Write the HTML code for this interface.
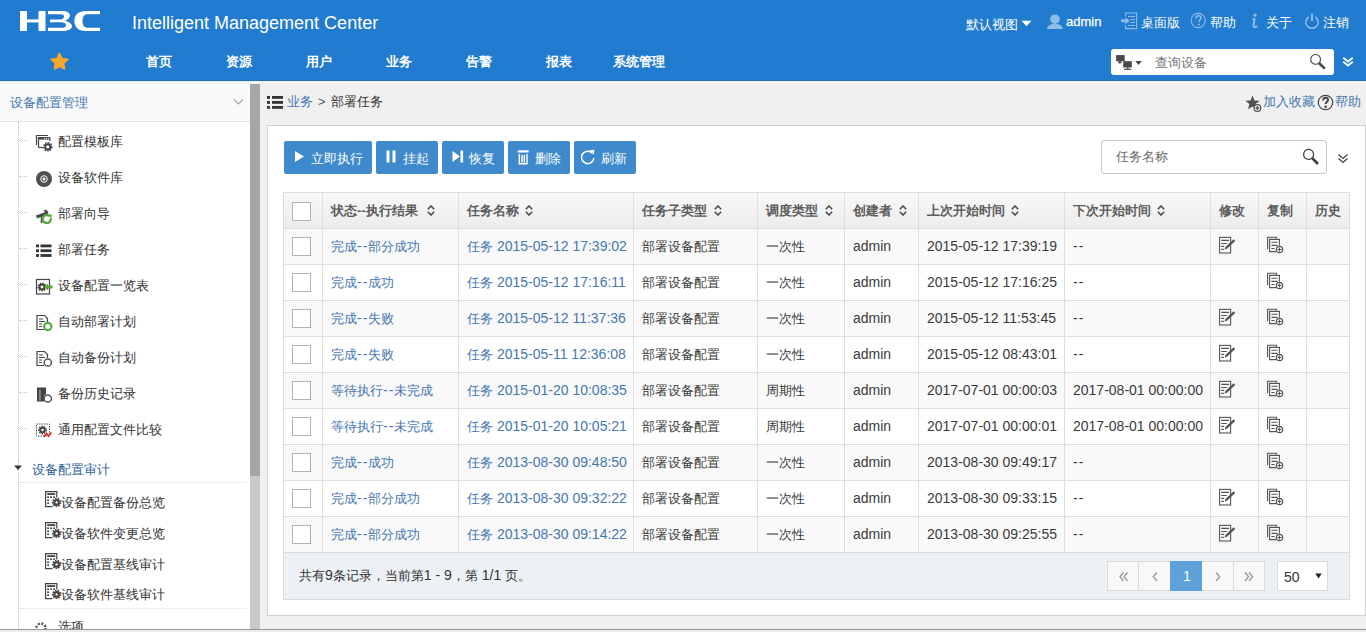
<!DOCTYPE html>
<html><head><meta charset="utf-8">
<style>
*{margin:0;padding:0;box-sizing:border-box}
html,body{width:1366px;height:632px;overflow:hidden;background:#f0f0f0;font-family:"Liberation Sans",sans-serif;font-size:13px;color:#333}
.a{position:absolute;white-space:nowrap;line-height:16px}
.l{font-size:14px;line-height:0}
.hy{font-size:14px;line-height:0;letter-spacing:1px}
#hdr{position:absolute;left:0;top:0;width:1366px;height:81px;background:#217bce;border-bottom:1px solid #2a6cb0}
.nav{position:absolute;top:54px;font-size:13px;font-weight:bold;color:#fff;line-height:16px}
.tl{position:absolute;top:15px;font-size:13px;color:#fff;line-height:16px;white-space:nowrap}
#side{position:absolute;left:0;top:81px;width:250px;height:548px;background:#fff;overflow:hidden}
#main{position:absolute;left:260px;top:81px;width:1106px;height:548px;background:#f0f0f0}
</style></head><body>
<div id="hdr">
<svg class="a" style="left:0;top:0" width="110" height="45" viewBox="0 0 110 45"><g fill="#fff">
<rect x="20" y="11" width="7" height="20"/><rect x="38.5" y="11" width="7" height="20"/><rect x="20" y="19.4" width="25" height="3"/>
<path d="M48,11 H62 C67.5,11 70,13 70,15.5 C70,17.5 68,19.5 65,20.8 C69,21.8 72,24 72,26 C72,29.5 68,31 62,31 H48 V27.8 H61 C64.5,27.8 66,27 66,25.5 C66,23.5 64.5,22.3 61,22.3 H50 V19.4 H60 C63,19.4 64,18 64,16.5 C64,15 63,14.3 60,14.3 H48 Z"/>
<path d="M100,11 H86 C78,11 74.4,15 74.4,21 C74.4,27 78,31 86,31 H100 V27.8 H88 C84,27.8 82.5,25 82.5,21 C82.5,17 84,14.3 88,14.3 H100 Z"/>
</g></svg>
<div class="a" style="left:132px;top:12px;font-size:18px;line-height:22px;color:#fff">Intelligent Management Center</div>
<div class="tl" style="left:966px;top:17px">默认视图</div>
<svg class="a" style="left:1021px;top:20px" width="11" height="7" viewBox="0 0 11 7"><path fill="#fff" d="M0.5 0.8 H10.5 L5.5 6.2 Z"/></svg>
<svg class="a" style="left:1047px;top:14px" width="17" height="16" viewBox="0 0 17 16"><g fill="#8fbde9"><circle cx="8" cy="5.2" r="4.8"/><path d="M0 15 C0.5 11.5 3 10 8 10 C13 10 15.5 11.5 16 15 Z"/></g></svg>
<div class="tl" style="left:1066px;top:14px;-webkit-text-stroke:0.25px #fff">admin</div>
<svg class="a" style="left:1120px;top:12px" width="18" height="18" viewBox="0 0 18 18"><g fill="none" stroke="#8fbde9" stroke-width="1.1"><path d="M5.6 4.2 V1 H16.6 V16.6 H5.6 V13.2"/><path d="M8 4.5 H15 M10.5 7.5 H15 M10.5 10.5 H15 M8 13.5 H15"/></g><path fill="#8fbde9" d="M1 7.3 H5.5 V5.2 L9.7 8.75 L5.5 12.3 V10.2 H1 Z"/></svg>
<div class="tl" style="left:1141px">桌面版</div>
<svg class="a" style="left:1190px;top:12px" width="17" height="17" viewBox="0 0 17 17"><circle cx="8.2" cy="8.5" r="7.1" fill="none" stroke="#8fbde9" stroke-width="1.1"/><path d="M6 6.5 C6 4.5 7.2 3.8 8.5 3.8 C10 3.8 11 4.7 11 6 C11 7.6 8.7 7.9 8.7 10" fill="none" stroke="#8fbde9" stroke-width="1.5"/><circle cx="8.7" cy="12.5" r="1" fill="#8fbde9"/></svg>
<div class="tl" style="left:1210px">帮助</div>
<svg class="a" style="left:1250px;top:13px" width="10" height="16" viewBox="0 0 10 16"><circle cx="5" cy="2.2" r="1.6" fill="#8fbde9"/><path d="M3.6 6 L4.4 6 L3.6 12.5 C3.4 14 4.6 14.6 6.6 13.6" fill="none" stroke="#8fbde9" stroke-width="2.1" stroke-linecap="round"/></svg>
<div class="tl" style="left:1266px">关于</div>
<svg class="a" style="left:1304px;top:13px" width="16" height="17" viewBox="0 0 16 17"><path d="M4.5 4 A6.2 6.2 0 1 0 11.5 4" fill="none" stroke="#8fbde9" stroke-width="1.6"/><path d="M8 0.6 V8" stroke="#8fbde9" stroke-width="1.9"/></svg>
<div class="tl" style="left:1323px">注销</div>
<svg class="a" style="left:49.5px;top:52px" width="19" height="20" viewBox="0 0 19 20"><path fill="#f9a62a" stroke="#f9a62a" stroke-width="1.6" stroke-linejoin="round" d="M9.50 1.40 L12.03 6.52 L17.68 7.34 L13.59 11.33 L14.55 16.96 L9.50 14.30 L4.45 16.96 L5.41 11.33 L1.32 7.34 L6.97 6.52 Z"/></svg>
<div class="nav" style="left:146px">首页</div>
<div class="nav" style="left:226px">资源</div>
<div class="nav" style="left:306px">用户</div>
<div class="nav" style="left:386px">业务</div>
<div class="nav" style="left:466px">告警</div>
<div class="nav" style="left:546px">报表</div>
<div class="nav" style="left:613px">系统管理</div>
<div class="a" style="left:1111px;top:49px;width:223px;height:26px;background:#fff;border-radius:3px"></div>
<svg class="a" style="left:1115px;top:54px" width="28" height="17" viewBox="0 0 28 17"><g fill="#484848"><rect x="1.1" y="1.1" width="8.6" height="6.1"/><path d="M3 7.2 H6.7 V8.8 H5.8 V9.6 H3.8 V8.8 H3 Z"/><rect x="8.2" y="7.2" width="8.6" height="6.3"/><rect x="11.8" y="13.4" width="1.8" height="1.5"/><rect x="9" y="14.8" width="7" height="1.1"/><path d="M20.3 7 H26.8 L23.55 11 Z"/></g></svg>
<div class="a" style="left:1155px;top:55px;color:#777">查询设备</div>
<svg class="a" style="left:1309px;top:53px" width="19" height="18" viewBox="0 0 19 18"><circle cx="6.6" cy="6.4" r="4.9" fill="none" stroke="#444" stroke-width="1.1"/><path d="M10.2 10.2 L15.8 15.6" stroke="#444" stroke-width="2.6"/></svg>
<svg class="a" style="left:1342px;top:56px" width="12" height="12" viewBox="0 0 12 12"><path d="M1.2 1.8 L6 5.6 L10.8 1.8 M1.2 5.8 L6 9.6 L10.8 5.8" fill="none" stroke="#eef5fc" stroke-width="1.9"/></svg>
</div>
<div id="side">
<div class="a" style="left:0;top:0;width:250px;height:41px;background:linear-gradient(#fbfafa,#f8f9fb);border-bottom:1px solid #e3e3e3"></div>
<div class="a" style="left:10px;top:14px;color:#4677b0">设备配置管理</div>
<svg class="a" style="left:233px;top:17px" width="11" height="8" viewBox="0 0 11 8"><path d="M1 1.5 L5.5 6 L10 1.5" fill="none" stroke="#aaa" stroke-width="1.2"/></svg>
<div class="a" style="left:18px;top:41px;width:0;height:340px;border-left:1px dotted #b8c4d0"></div>
<div class="a" style="left:19px;top:59px;width:8px;height:0;border-top:1px dotted #b8c4d0"></div>
<svg class="a" style="left:35px;top:52px" width="18" height="19" viewBox="0 0 18 19"><path d="M1.5 12 V2.5 H13" fill="none" stroke="#444" stroke-width="1.2"/><path d="M3.5 14.5 V4.5 H14.8 V8" fill="none" stroke="#444" stroke-width="1.2"/><rect x="3.5" y="4" width="11.3" height="2.6" fill="#444"/><circle cx="9.5" cy="5.3" r="0.6" fill="#fff"/><circle cx="11.5" cy="5.3" r="0.6" fill="#fff"/><circle cx="13.4" cy="5.3" r="0.6" fill="#fff"/><path d="M8 14.5 H3.5" stroke="#444" stroke-width="1.2"/><circle cx="12.8" cy="13.8" r="2.6" fill="none" stroke="#444" stroke-width="2"/><circle cx="12.8" cy="13.8" r="4.1" fill="none" stroke="#444" stroke-width="1.4" stroke-dasharray="1.6 1.1"/></svg>
<div class="a" style="left:58px;top:53px;color:#333">配置模板库</div>
<div class="a" style="left:19px;top:95px;width:8px;height:0;border-top:1px dotted #b8c4d0"></div>
<svg class="a" style="left:35px;top:88px" width="18" height="19" viewBox="0 0 18 19"><circle cx="9" cy="10" r="8" fill="#505050"/><circle cx="9" cy="10" r="3.3" fill="none" stroke="#fff" stroke-width="1"/><circle cx="9" cy="10" r="1.5" fill="#fff"/></svg>
<div class="a" style="left:58px;top:89px;color:#333">设备软件库</div>
<div class="a" style="left:19px;top:131px;width:8px;height:0;border-top:1px dotted #b8c4d0"></div>
<svg class="a" style="left:35px;top:124px" width="18" height="19" viewBox="0 0 18 19"><path d="M1.5 12 L12.5 7.8" stroke="#4a4a4a" stroke-width="3"/><path d="M9 6.5 L11 5.5 L13 8" stroke="#4a4a4a" stroke-width="1.6" fill="none"/><path d="M6.5 10 V18" stroke="#4a4a4a" stroke-width="1.6"/><path d="M15.6 13.2 A4 4 0 1 1 14.5 11.2" fill="none" stroke="#5aa83a" stroke-width="2.4"/><path d="M13 9.5 L17 9.8 L16.2 13.6 Z" fill="#5aa83a"/></svg>
<div class="a" style="left:58px;top:125px;color:#333">部署向导</div>
<div class="a" style="left:19px;top:167px;width:8px;height:0;border-top:1px dotted #b8c4d0"></div>
<svg class="a" style="left:35px;top:160px" width="18" height="19" viewBox="0 0 18 19"><g fill="#333"><rect x="1" y="3.5" width="3" height="2.8"/><rect x="5.5" y="3.5" width="11" height="2.8"/><rect x="1" y="8.3" width="3" height="2.8"/><rect x="5.5" y="8.3" width="11" height="2.8"/><rect x="1" y="13.1" width="3" height="2.8"/><rect x="5.5" y="13.1" width="11" height="2.8"/></g></svg>
<div class="a" style="left:58px;top:161px;color:#333">部署任务</div>
<div class="a" style="left:19px;top:203px;width:8px;height:0;border-top:1px dotted #b8c4d0"></div>
<svg class="a" style="left:35px;top:196px" width="18" height="19" viewBox="0 0 18 19"><rect x="1.5" y="2.5" width="13" height="14.5" fill="none" stroke="#444" stroke-width="1.2"/><circle cx="7" cy="10" r="2.4" fill="none" stroke="#444" stroke-width="2"/><circle cx="7" cy="10" r="3.9" fill="none" stroke="#444" stroke-width="1.4" stroke-dasharray="1.5 1.1"/><path d="M9 10 L13 6.5 V8.5 H17.5 V11.5 H13 V13.5 Z" fill="#5aa83a"/></svg>
<div class="a" style="left:58px;top:197px;color:#333">设备配置一览表</div>
<div class="a" style="left:19px;top:239px;width:8px;height:0;border-top:1px dotted #b8c4d0"></div>
<svg class="a" style="left:35px;top:232px" width="18" height="19" viewBox="0 0 18 19"><path d="M9 16.5 H2 V2.5 H9.5 L12.5 5.5 V9" fill="none" stroke="#444" stroke-width="1.2"/><path d="M4 6 H8 M4 8.5 H10 M4 11 H7 M4 13.5 H7" stroke="#444" stroke-width="1.2"/><circle cx="12.8" cy="13.5" r="3.6" fill="none" stroke="#5aa83a" stroke-width="2.2"/></svg>
<div class="a" style="left:58px;top:233px;color:#333">自动部署计划</div>
<div class="a" style="left:19px;top:275px;width:8px;height:0;border-top:1px dotted #b8c4d0"></div>
<svg class="a" style="left:35px;top:268px" width="18" height="19" viewBox="0 0 18 19"><path d="M9 16.5 H2 V2.5 H9.5 L12.5 5.5 V9" fill="none" stroke="#444" stroke-width="1.2"/><path d="M4 6 H8 M4 8.5 H10 M4 11 H7 M4 13.5 H7" stroke="#444" stroke-width="1.2"/><circle cx="12.8" cy="13.5" r="3.6" fill="none" stroke="#555" stroke-width="1.5"/></svg>
<div class="a" style="left:58px;top:269px;color:#333">自动备份计划</div>
<div class="a" style="left:19px;top:311px;width:8px;height:0;border-top:1px dotted #b8c4d0"></div>
<svg class="a" style="left:35px;top:304px" width="18" height="19" viewBox="0 0 18 19"><path d="M2 2.5 H11 V9 L9 11 V16.5 H2 Z" fill="#444"/><rect x="4" y="4.5" width="1.8" height="11" fill="#888"/><circle cx="12.8" cy="13.5" r="3.6" fill="none" stroke="#555" stroke-width="1.5"/></svg>
<div class="a" style="left:58px;top:305px;color:#333">备份历史记录</div>
<div class="a" style="left:19px;top:347px;width:8px;height:0;border-top:1px dotted #b8c4d0"></div>
<svg class="a" style="left:35px;top:340px" width="18" height="19" viewBox="0 0 18 19"><rect x="1.5" y="3" width="13" height="12" fill="none" stroke="#555" stroke-width="1" stroke-dasharray="1.5 1"/><circle cx="7.5" cy="9" r="2.3" fill="none" stroke="#444" stroke-width="2"/><circle cx="7.5" cy="9" r="3.7" fill="none" stroke="#444" stroke-width="1.4" stroke-dasharray="1.5 1.1"/><path d="M9 16 L11.5 12.5 L13.5 15 L16.5 11.5" fill="none" stroke="#e02020" stroke-width="1.5"/></svg>
<div class="a" style="left:58px;top:341px;color:#333">通用配置文件比较</div>
<div class="a" style="left:18px;top:378px;width:0;height:170px;border-left:1px dotted #b8c4d0"></div>
<svg class="a" style="left:13px;top:384px" width="10" height="6" viewBox="0 0 10 6"><path d="M1 0.5 H9 L5 5 Z" fill="#333"/></svg>
<div class="a" style="left:32px;top:381px;color:#2f5f9a">设备配置审计</div>
<div class="a" style="left:20px;top:401px;width:226px;height:0;border-top:1px dotted #d8dde3"></div>
<svg class="a" style="left:45px;top:410px" width="17" height="17" viewBox="0 0 17 17"><path d="M7.5 15.6 H0.6 V0.6 H11.8 V6.5" fill="none" stroke="#444" stroke-width="1.2"/><g fill="#444"><rect x="2.2" y="2.2" width="8" height="1.8"/><rect x="2.2" y="5.4" width="1.8" height="1.6"/><rect x="5.2" y="5.4" width="1.8" height="1.6"/><rect x="8.2" y="5.4" width="1.8" height="1.6"/><rect x="2.2" y="8.4" width="1.8" height="1.6"/><rect x="2.2" y="11.4" width="1.8" height="1.6"/></g><circle cx="11.6" cy="11.4" r="2.3" fill="none" stroke="#444" stroke-width="2.2"/><circle cx="11.6" cy="11.4" r="3.9" fill="none" stroke="#444" stroke-width="1.6" stroke-dasharray="1.6 1.1"/></svg>
<div class="a" style="left:61px;top:414px;color:#333">设备配置备份总览</div>
<svg class="a" style="left:45px;top:441px" width="17" height="17" viewBox="0 0 17 17"><path d="M7.5 15.6 H0.6 V0.6 H11.8 V6.5" fill="none" stroke="#444" stroke-width="1.2"/><g fill="#444"><rect x="2.2" y="2.2" width="8" height="1.8"/><rect x="2.2" y="5.4" width="1.8" height="1.6"/><rect x="5.2" y="5.4" width="1.8" height="1.6"/><rect x="8.2" y="5.4" width="1.8" height="1.6"/><rect x="2.2" y="8.4" width="1.8" height="1.6"/><rect x="2.2" y="11.4" width="1.8" height="1.6"/></g><circle cx="11.6" cy="11.4" r="2.3" fill="none" stroke="#444" stroke-width="2.2"/><circle cx="11.6" cy="11.4" r="3.9" fill="none" stroke="#444" stroke-width="1.6" stroke-dasharray="1.6 1.1"/></svg>
<div class="a" style="left:61px;top:445px;color:#333">设备软件变更总览</div>
<svg class="a" style="left:45px;top:472px" width="17" height="17" viewBox="0 0 17 17"><path d="M7.5 15.6 H0.6 V0.6 H11.8 V6.5" fill="none" stroke="#444" stroke-width="1.2"/><g fill="#444"><rect x="2.2" y="2.2" width="8" height="1.8"/><rect x="2.2" y="5.4" width="1.8" height="1.6"/><rect x="5.2" y="5.4" width="1.8" height="1.6"/><rect x="8.2" y="5.4" width="1.8" height="1.6"/><rect x="2.2" y="8.4" width="1.8" height="1.6"/><rect x="2.2" y="11.4" width="1.8" height="1.6"/></g><circle cx="11.6" cy="11.4" r="2.3" fill="none" stroke="#444" stroke-width="2.2"/><circle cx="11.6" cy="11.4" r="3.9" fill="none" stroke="#444" stroke-width="1.6" stroke-dasharray="1.6 1.1"/></svg>
<div class="a" style="left:61px;top:476px;color:#333">设备配置基线审计</div>
<svg class="a" style="left:45px;top:502px" width="17" height="17" viewBox="0 0 17 17"><path d="M7.5 15.6 H0.6 V0.6 H11.8 V6.5" fill="none" stroke="#444" stroke-width="1.2"/><g fill="#444"><rect x="2.2" y="2.2" width="8" height="1.8"/><rect x="2.2" y="5.4" width="1.8" height="1.6"/><rect x="5.2" y="5.4" width="1.8" height="1.6"/><rect x="8.2" y="5.4" width="1.8" height="1.6"/><rect x="2.2" y="8.4" width="1.8" height="1.6"/><rect x="2.2" y="11.4" width="1.8" height="1.6"/></g><circle cx="11.6" cy="11.4" r="2.3" fill="none" stroke="#444" stroke-width="2.2"/><circle cx="11.6" cy="11.4" r="3.9" fill="none" stroke="#444" stroke-width="1.6" stroke-dasharray="1.6 1.1"/></svg>
<div class="a" style="left:61px;top:506px;color:#333">设备软件基线审计</div>
<div class="a" style="left:20px;top:527px;width:226px;height:0;border-top:1px dotted #d8dde3"></div>
<svg class="a" style="left:34px;top:540px" width="14" height="14" viewBox="0 0 14 14"><circle cx="7" cy="7" r="4.5" fill="none" stroke="#555" stroke-width="2.5" stroke-dasharray="2 1.5"/></svg>
<div class="a" style="left:58px;top:538px;color:#333">选项</div>
</div>
<div class="a" style="left:250px;top:84px;width:10px;height:545px;background:#c9c9c9"></div>
<div class="a" style="left:0;top:81px;width:1366px;height:1px;background:#e4f5fc"></div>
<div class="a" style="left:0;top:82px;width:1366px;height:2px;background:#f1f2f4"></div>
<div class="a" style="left:250px;top:84px;width:10px;height:392px;background:#a6a6a6"></div>
<div id="main">
<svg class="a" style="left:7px;top:15px" width="16" height="13" viewBox="0 0 16 13"><g fill="#333"><rect x="0" y="0" width="3" height="2.8"/><rect x="5" y="0" width="11" height="2.8"/><rect x="0" y="5" width="3" height="2.8"/><rect x="5" y="5" width="11" height="2.8"/><rect x="0" y="10" width="3" height="2.8"/><rect x="5" y="10" width="11" height="2.8"/></g></svg>
<div class="a" style="left:27px;top:13px;color:#4677b0">业务</div>
<div class="a" style="left:58px;top:13px;color:#555">&gt;</div>
<div class="a" style="left:71px;top:13px;color:#333">部署任务</div>
<svg class="a" style="left:985px;top:14px" width="18" height="17" viewBox="0 0 18 17"><path fill="#505050" d="M7.50 0.50 L9.44 5.43 L14.73 5.75 L10.64 9.12 L11.97 14.25 L7.50 11.40 L3.03 14.25 L4.36 9.12 L0.27 5.75 L5.56 5.43 Z"/><circle cx="12.4" cy="13" r="3.4" fill="#fff" stroke="#505050" stroke-width="1.2"/><path d="M12.4 11 V15 M10.4 13 H14.4" stroke="#505050" stroke-width="1.3"/></svg>
<div class="a" style="left:1003px;top:13px;color:#4677b0">加入收藏</div>
<svg class="a" style="left:1057px;top:13px" width="17" height="17" viewBox="0 0 17 17"><circle cx="8.5" cy="8.5" r="7.2" fill="none" stroke="#444" stroke-width="1.2"/><path d="M6 6.5 C6 4.5 7.2 3.8 8.5 3.8 C10 3.8 11 4.7 11 6 C11 7.6 8.7 7.9 8.7 10" fill="none" stroke="#444" stroke-width="2"/><circle cx="8.7" cy="12.8" r="1.3" fill="#444"/></svg>
<div class="a" style="left:1075px;top:13px;color:#4677b0">帮助</div>
<div class="a" style="left:7px;top:44px;width:1099px;height:491px;background:#fff;border:1px solid #d0d0d0"></div>
<div class="a" style="left:24px;top:60px;width:88px;height:33px;background:#3e8acc;border-radius:2px"></div>
<svg class="a" style="left:33px;top:68px" width="15" height="17" viewBox="0 0 15 17"><path d="M2 2 L11 7.5 L2 13 Z" fill="#fff"/></svg>
<div class="a" style="left:51px;top:70px;color:#fff">立即执行</div>
<div class="a" style="left:116px;top:60px;width:62px;height:33px;background:#3e8acc;border-radius:2px"></div>
<svg class="a" style="left:125px;top:68px" width="15" height="17" viewBox="0 0 15 17"><rect x="1.5" y="1.5" width="3" height="12" fill="#fff"/><rect x="7.5" y="1.5" width="3" height="12" fill="#fff"/></svg>
<div class="a" style="left:143px;top:70px;color:#fff">挂起</div>
<div class="a" style="left:182px;top:60px;width:62px;height:33px;background:#3e8acc;border-radius:2px"></div>
<svg class="a" style="left:191px;top:68px" width="15" height="17" viewBox="0 0 15 17"><path d="M1.5 2 L9 7.5 L1.5 13 Z" fill="#fff"/><rect x="9.5" y="1.5" width="2.6" height="12" fill="#fff"/></svg>
<div class="a" style="left:209px;top:70px;color:#fff">恢复</div>
<div class="a" style="left:248px;top:60px;width:62px;height:33px;background:#3e8acc;border-radius:2px"></div>
<svg class="a" style="left:257px;top:68px" width="15" height="17" viewBox="0 0 15 17"><rect x="0.6" y="1.3" width="11" height="2.2" fill="#fff"/><path d="M2.3 5 V14.8 H10 V5 M5 6 V13.5 M7.3 6 V13.5" fill="none" stroke="#fff" stroke-width="1.4"/></svg>
<div class="a" style="left:275px;top:70px;color:#fff">删除</div>
<div class="a" style="left:314px;top:60px;width:62px;height:33px;background:#3e8acc;border-radius:2px"></div>
<svg class="a" style="left:321px;top:68px" width="15" height="17" viewBox="0 0 15 17"><path d="M11.3 4.2 A6.2 6.2 0 1 0 12.9 9" fill="none" stroke="#fff" stroke-width="1.6"/><path d="M8.6 1.2 L13.4 0.8 L13 5.8 Z" fill="#fff"/></svg>
<div class="a" style="left:341px;top:70px;color:#fff">刷新</div>
<div class="a" style="left:841px;top:59px;width:226px;height:34px;background:#fff;border:1px solid #c8c8c8;border-radius:3px"></div>
<div class="a" style="left:856px;top:68px;color:#6a6a6a">任务名称</div>
<svg class="a" style="left:1042px;top:67px" width="19" height="18" viewBox="0 0 19 18"><circle cx="6.6" cy="6.4" r="5" fill="none" stroke="#3a3a3a" stroke-width="1.2"/><path d="M10.2 10.2 L16 16" stroke="#3a3a3a" stroke-width="2.6"/></svg>
<svg class="a" style="left:1077px;top:72px" width="12" height="12" viewBox="0 0 12 12"><path d="M1.5 1.5 L6 5.5 L10.5 1.5 M1.5 5.5 L6 9.5 L10.5 5.5" fill="none" stroke="#444" stroke-width="1.3"/></svg>
<div class="a" style="left:23px;top:111px;width:1067px;height:408px;border:1px solid #dcdcdc;background:#fff"></div>
<div class="a" style="left:23px;top:111px;width:1067px;height:37px;background:linear-gradient(#f8f8f8,#ececec);border:1px solid #dcdcdc;border-bottom:1px solid #d0d0d0"></div>
<div class="a" style="left:24px;top:147px;width:1065px;height:36px;background:#f9f9f9;border-top:1px solid #dedede"></div>
<div class="a" style="left:24px;top:183px;width:1065px;height:36px;background:#fff;border-top:1px solid #dedede"></div>
<div class="a" style="left:24px;top:219px;width:1065px;height:36px;background:#f9f9f9;border-top:1px solid #dedede"></div>
<div class="a" style="left:24px;top:255px;width:1065px;height:36px;background:#fff;border-top:1px solid #dedede"></div>
<div class="a" style="left:24px;top:291px;width:1065px;height:36px;background:#f9f9f9;border-top:1px solid #dedede"></div>
<div class="a" style="left:24px;top:327px;width:1065px;height:36px;background:#fff;border-top:1px solid #dedede"></div>
<div class="a" style="left:24px;top:363px;width:1065px;height:36px;background:#f9f9f9;border-top:1px solid #dedede"></div>
<div class="a" style="left:24px;top:399px;width:1065px;height:36px;background:#fff;border-top:1px solid #dedede"></div>
<div class="a" style="left:24px;top:435px;width:1065px;height:36px;background:#f9f9f9;border-top:1px solid #dedede"></div>
<div class="a" style="left:23px;top:471px;width:1067px;height:48px;background:#edf1f6;border:1px solid #dcdcdc"></div>
<div class="a" style="left:62px;top:111px;width:1px;height:360px;background:#dedede"></div>
<div class="a" style="left:198px;top:111px;width:1px;height:360px;background:#dedede"></div>
<div class="a" style="left:373px;top:111px;width:1px;height:360px;background:#dedede"></div>
<div class="a" style="left:497px;top:111px;width:1px;height:360px;background:#dedede"></div>
<div class="a" style="left:584px;top:111px;width:1px;height:360px;background:#dedede"></div>
<div class="a" style="left:658px;top:111px;width:1px;height:360px;background:#dedede"></div>
<div class="a" style="left:804px;top:111px;width:1px;height:360px;background:#dedede"></div>
<div class="a" style="left:950px;top:111px;width:1px;height:360px;background:#dedede"></div>
<div class="a" style="left:998px;top:111px;width:1px;height:360px;background:#dedede"></div>
<div class="a" style="left:1046px;top:111px;width:1px;height:360px;background:#dedede"></div>
<div class="a" style="left:32px;top:121px;width:19px;height:19px;background:#fff;border:1px solid #b2b2b2"></div>
<div class="a" style="left:71px;top:122px;color:#5c5c5c;font-weight:bold">状态--执行结果</div>
<div class="a" style="left:207px;top:122px;color:#5c5c5c;font-weight:bold">任务名称</div>
<div class="a" style="left:382px;top:122px;color:#5c5c5c;font-weight:bold">任务子类型</div>
<div class="a" style="left:506px;top:122px;color:#5c5c5c;font-weight:bold">调度类型</div>
<div class="a" style="left:593px;top:122px;color:#5c5c5c;font-weight:bold">创建者</div>
<div class="a" style="left:667px;top:122px;color:#5c5c5c;font-weight:bold">上次开始时间</div>
<div class="a" style="left:813px;top:122px;color:#5c5c5c;font-weight:bold">下次开始时间</div>
<div class="a" style="left:959px;top:122px;color:#5c5c5c;font-weight:bold">修改</div>
<div class="a" style="left:1007px;top:122px;color:#5c5c5c;font-weight:bold">复制</div>
<div class="a" style="left:1055px;top:122px;color:#5c5c5c;font-weight:bold">历史</div>
<svg class="a" style="left:167px;top:124px" width="8" height="11" viewBox="0 0 8 11"><path d="M0.8 4.2 L4 1 L7.2 4.2 M0.8 6.8 L4 10 L7.2 6.8" fill="none" stroke="#444" stroke-width="1.5"/></svg>
<svg class="a" style="left:265px;top:124px" width="8" height="11" viewBox="0 0 8 11"><path d="M0.8 4.2 L4 1 L7.2 4.2 M0.8 6.8 L4 10 L7.2 6.8" fill="none" stroke="#444" stroke-width="1.5"/></svg>
<svg class="a" style="left:454px;top:124px" width="8" height="11" viewBox="0 0 8 11"><path d="M0.8 4.2 L4 1 L7.2 4.2 M0.8 6.8 L4 10 L7.2 6.8" fill="none" stroke="#444" stroke-width="1.5"/></svg>
<svg class="a" style="left:565px;top:124px" width="8" height="11" viewBox="0 0 8 11"><path d="M0.8 4.2 L4 1 L7.2 4.2 M0.8 6.8 L4 10 L7.2 6.8" fill="none" stroke="#444" stroke-width="1.5"/></svg>
<svg class="a" style="left:639px;top:124px" width="8" height="11" viewBox="0 0 8 11"><path d="M0.8 4.2 L4 1 L7.2 4.2 M0.8 6.8 L4 10 L7.2 6.8" fill="none" stroke="#444" stroke-width="1.5"/></svg>
<svg class="a" style="left:751px;top:124px" width="8" height="11" viewBox="0 0 8 11"><path d="M0.8 4.2 L4 1 L7.2 4.2 M0.8 6.8 L4 10 L7.2 6.8" fill="none" stroke="#444" stroke-width="1.5"/></svg>
<svg class="a" style="left:897px;top:124px" width="8" height="11" viewBox="0 0 8 11"><path d="M0.8 4.2 L4 1 L7.2 4.2 M0.8 6.8 L4 10 L7.2 6.8" fill="none" stroke="#444" stroke-width="1.5"/></svg>
<div class="a" style="left:32px;top:156px;width:19px;height:19px;background:#fff;border:1px solid #b2b2b2"></div>
<div class="a" style="left:71px;top:158px;color:#4677b0">完成<span class="hy">--</span>部分成功</div>
<div class="a" style="left:207px;top:158px;color:#4677b0">任务<span class="l"> 2015-05-12 17:39:02</span></div>
<div class="a" style="left:382px;top:158px;color:#3a3a3a">部署设备配置</div>
<div class="a" style="left:506px;top:158px;color:#3a3a3a">一次性</div>
<div class="a" style="left:593px;top:158px;color:#3a3a3a"><span class="l">admin</span></div>
<div class="a" style="left:667px;top:158px;color:#3a3a3a"><span class="l">2015-05-12 17:39:19</span></div>
<div class="a" style="left:813px;top:158px;color:#3a3a3a"><span class="hy">--</span></div>
<div class="a" style="left:958px;top:155px"><svg width="19" height="18" viewBox="0 0 19 18"><rect x="1.6" y="1.4" width="11" height="15.6" fill="none" stroke="#555" stroke-width="1.1"/><path d="M3.2 4.4 H11 M3.2 7.5 H8.8 M3.2 10.4 H6.2 M3.2 13.4 H5.8" stroke="#555" stroke-width="1.1"/><path d="M8.2 11.8 L16.4 4.2" stroke="#555" stroke-width="2.3"/><path d="M6.6 13.6 L7.3 11 L9.2 12.8 Z" fill="#555"/></svg></div>
<div class="a" style="left:1006px;top:155px"><svg width="18" height="18" viewBox="0 0 18 18"><path d="M1.6 13.3 V1.3 H10.4 V2.8" fill="none" stroke="#555" stroke-width="1.1"/><path d="M10 15.6 H3.6 V3.4 H13.4 V9.5" fill="none" stroke="#555" stroke-width="1.1"/><path d="M5.4 6.3 H11.6 M5.4 9.4 H11.6 M5.4 12.5 H8.5" stroke="#555" stroke-width="1.1"/><circle cx="13.5" cy="13.5" r="3.2" fill="#f9f9f9" stroke="#555" stroke-width="1.2"/><path d="M13.5 11.6 V15.4 M11.6 13.5 H15.4" stroke="#555" stroke-width="1.2"/></svg></div>
<div class="a" style="left:32px;top:192px;width:19px;height:19px;background:#fff;border:1px solid #b2b2b2"></div>
<div class="a" style="left:71px;top:194px;color:#4677b0">完成<span class="hy">--</span>成功</div>
<div class="a" style="left:207px;top:194px;color:#4677b0">任务<span class="l"> 2015-05-12 17:16:11</span></div>
<div class="a" style="left:382px;top:194px;color:#3a3a3a">部署设备配置</div>
<div class="a" style="left:506px;top:194px;color:#3a3a3a">一次性</div>
<div class="a" style="left:593px;top:194px;color:#3a3a3a"><span class="l">admin</span></div>
<div class="a" style="left:667px;top:194px;color:#3a3a3a"><span class="l">2015-05-12 17:16:25</span></div>
<div class="a" style="left:813px;top:194px;color:#3a3a3a"><span class="hy">--</span></div>
<div class="a" style="left:1006px;top:191px"><svg width="18" height="18" viewBox="0 0 18 18"><path d="M1.6 13.3 V1.3 H10.4 V2.8" fill="none" stroke="#555" stroke-width="1.1"/><path d="M10 15.6 H3.6 V3.4 H13.4 V9.5" fill="none" stroke="#555" stroke-width="1.1"/><path d="M5.4 6.3 H11.6 M5.4 9.4 H11.6 M5.4 12.5 H8.5" stroke="#555" stroke-width="1.1"/><circle cx="13.5" cy="13.5" r="3.2" fill="#f9f9f9" stroke="#555" stroke-width="1.2"/><path d="M13.5 11.6 V15.4 M11.6 13.5 H15.4" stroke="#555" stroke-width="1.2"/></svg></div>
<div class="a" style="left:32px;top:228px;width:19px;height:19px;background:#fff;border:1px solid #b2b2b2"></div>
<div class="a" style="left:71px;top:230px;color:#4677b0">完成<span class="hy">--</span>失败</div>
<div class="a" style="left:207px;top:230px;color:#4677b0">任务<span class="l"> 2015-05-12 11:37:36</span></div>
<div class="a" style="left:382px;top:230px;color:#3a3a3a">部署设备配置</div>
<div class="a" style="left:506px;top:230px;color:#3a3a3a">一次性</div>
<div class="a" style="left:593px;top:230px;color:#3a3a3a"><span class="l">admin</span></div>
<div class="a" style="left:667px;top:230px;color:#3a3a3a"><span class="l">2015-05-12 11:53:45</span></div>
<div class="a" style="left:813px;top:230px;color:#3a3a3a"><span class="hy">--</span></div>
<div class="a" style="left:958px;top:227px"><svg width="19" height="18" viewBox="0 0 19 18"><rect x="1.6" y="1.4" width="11" height="15.6" fill="none" stroke="#555" stroke-width="1.1"/><path d="M3.2 4.4 H11 M3.2 7.5 H8.8 M3.2 10.4 H6.2 M3.2 13.4 H5.8" stroke="#555" stroke-width="1.1"/><path d="M8.2 11.8 L16.4 4.2" stroke="#555" stroke-width="2.3"/><path d="M6.6 13.6 L7.3 11 L9.2 12.8 Z" fill="#555"/></svg></div>
<div class="a" style="left:1006px;top:227px"><svg width="18" height="18" viewBox="0 0 18 18"><path d="M1.6 13.3 V1.3 H10.4 V2.8" fill="none" stroke="#555" stroke-width="1.1"/><path d="M10 15.6 H3.6 V3.4 H13.4 V9.5" fill="none" stroke="#555" stroke-width="1.1"/><path d="M5.4 6.3 H11.6 M5.4 9.4 H11.6 M5.4 12.5 H8.5" stroke="#555" stroke-width="1.1"/><circle cx="13.5" cy="13.5" r="3.2" fill="#f9f9f9" stroke="#555" stroke-width="1.2"/><path d="M13.5 11.6 V15.4 M11.6 13.5 H15.4" stroke="#555" stroke-width="1.2"/></svg></div>
<div class="a" style="left:32px;top:264px;width:19px;height:19px;background:#fff;border:1px solid #b2b2b2"></div>
<div class="a" style="left:71px;top:266px;color:#4677b0">完成<span class="hy">--</span>失败</div>
<div class="a" style="left:207px;top:266px;color:#4677b0">任务<span class="l"> 2015-05-11 12:36:08</span></div>
<div class="a" style="left:382px;top:266px;color:#3a3a3a">部署设备配置</div>
<div class="a" style="left:506px;top:266px;color:#3a3a3a">一次性</div>
<div class="a" style="left:593px;top:266px;color:#3a3a3a"><span class="l">admin</span></div>
<div class="a" style="left:667px;top:266px;color:#3a3a3a"><span class="l">2015-05-12 08:43:01</span></div>
<div class="a" style="left:813px;top:266px;color:#3a3a3a"><span class="hy">--</span></div>
<div class="a" style="left:958px;top:263px"><svg width="19" height="18" viewBox="0 0 19 18"><rect x="1.6" y="1.4" width="11" height="15.6" fill="none" stroke="#555" stroke-width="1.1"/><path d="M3.2 4.4 H11 M3.2 7.5 H8.8 M3.2 10.4 H6.2 M3.2 13.4 H5.8" stroke="#555" stroke-width="1.1"/><path d="M8.2 11.8 L16.4 4.2" stroke="#555" stroke-width="2.3"/><path d="M6.6 13.6 L7.3 11 L9.2 12.8 Z" fill="#555"/></svg></div>
<div class="a" style="left:1006px;top:263px"><svg width="18" height="18" viewBox="0 0 18 18"><path d="M1.6 13.3 V1.3 H10.4 V2.8" fill="none" stroke="#555" stroke-width="1.1"/><path d="M10 15.6 H3.6 V3.4 H13.4 V9.5" fill="none" stroke="#555" stroke-width="1.1"/><path d="M5.4 6.3 H11.6 M5.4 9.4 H11.6 M5.4 12.5 H8.5" stroke="#555" stroke-width="1.1"/><circle cx="13.5" cy="13.5" r="3.2" fill="#f9f9f9" stroke="#555" stroke-width="1.2"/><path d="M13.5 11.6 V15.4 M11.6 13.5 H15.4" stroke="#555" stroke-width="1.2"/></svg></div>
<div class="a" style="left:32px;top:300px;width:19px;height:19px;background:#fff;border:1px solid #b2b2b2"></div>
<div class="a" style="left:71px;top:302px;color:#4677b0">等待执行<span class="hy">--</span>未完成</div>
<div class="a" style="left:207px;top:302px;color:#4677b0">任务<span class="l"> 2015-01-20 10:08:35</span></div>
<div class="a" style="left:382px;top:302px;color:#3a3a3a">部署设备配置</div>
<div class="a" style="left:506px;top:302px;color:#3a3a3a">周期性</div>
<div class="a" style="left:593px;top:302px;color:#3a3a3a"><span class="l">admin</span></div>
<div class="a" style="left:667px;top:302px;color:#3a3a3a"><span class="l">2017-07-01 00:00:03</span></div>
<div class="a" style="left:813px;top:302px;color:#3a3a3a"><span class="l">2017-08-01 00:00:00</span></div>
<div class="a" style="left:958px;top:299px"><svg width="19" height="18" viewBox="0 0 19 18"><rect x="1.6" y="1.4" width="11" height="15.6" fill="none" stroke="#555" stroke-width="1.1"/><path d="M3.2 4.4 H11 M3.2 7.5 H8.8 M3.2 10.4 H6.2 M3.2 13.4 H5.8" stroke="#555" stroke-width="1.1"/><path d="M8.2 11.8 L16.4 4.2" stroke="#555" stroke-width="2.3"/><path d="M6.6 13.6 L7.3 11 L9.2 12.8 Z" fill="#555"/></svg></div>
<div class="a" style="left:1006px;top:299px"><svg width="18" height="18" viewBox="0 0 18 18"><path d="M1.6 13.3 V1.3 H10.4 V2.8" fill="none" stroke="#555" stroke-width="1.1"/><path d="M10 15.6 H3.6 V3.4 H13.4 V9.5" fill="none" stroke="#555" stroke-width="1.1"/><path d="M5.4 6.3 H11.6 M5.4 9.4 H11.6 M5.4 12.5 H8.5" stroke="#555" stroke-width="1.1"/><circle cx="13.5" cy="13.5" r="3.2" fill="#f9f9f9" stroke="#555" stroke-width="1.2"/><path d="M13.5 11.6 V15.4 M11.6 13.5 H15.4" stroke="#555" stroke-width="1.2"/></svg></div>
<div class="a" style="left:32px;top:336px;width:19px;height:19px;background:#fff;border:1px solid #b2b2b2"></div>
<div class="a" style="left:71px;top:338px;color:#4677b0">等待执行<span class="hy">--</span>未完成</div>
<div class="a" style="left:207px;top:338px;color:#4677b0">任务<span class="l"> 2015-01-20 10:05:21</span></div>
<div class="a" style="left:382px;top:338px;color:#3a3a3a">部署设备配置</div>
<div class="a" style="left:506px;top:338px;color:#3a3a3a">周期性</div>
<div class="a" style="left:593px;top:338px;color:#3a3a3a"><span class="l">admin</span></div>
<div class="a" style="left:667px;top:338px;color:#3a3a3a"><span class="l">2017-07-01 00:00:01</span></div>
<div class="a" style="left:813px;top:338px;color:#3a3a3a"><span class="l">2017-08-01 00:00:00</span></div>
<div class="a" style="left:958px;top:335px"><svg width="19" height="18" viewBox="0 0 19 18"><rect x="1.6" y="1.4" width="11" height="15.6" fill="none" stroke="#555" stroke-width="1.1"/><path d="M3.2 4.4 H11 M3.2 7.5 H8.8 M3.2 10.4 H6.2 M3.2 13.4 H5.8" stroke="#555" stroke-width="1.1"/><path d="M8.2 11.8 L16.4 4.2" stroke="#555" stroke-width="2.3"/><path d="M6.6 13.6 L7.3 11 L9.2 12.8 Z" fill="#555"/></svg></div>
<div class="a" style="left:1006px;top:335px"><svg width="18" height="18" viewBox="0 0 18 18"><path d="M1.6 13.3 V1.3 H10.4 V2.8" fill="none" stroke="#555" stroke-width="1.1"/><path d="M10 15.6 H3.6 V3.4 H13.4 V9.5" fill="none" stroke="#555" stroke-width="1.1"/><path d="M5.4 6.3 H11.6 M5.4 9.4 H11.6 M5.4 12.5 H8.5" stroke="#555" stroke-width="1.1"/><circle cx="13.5" cy="13.5" r="3.2" fill="#f9f9f9" stroke="#555" stroke-width="1.2"/><path d="M13.5 11.6 V15.4 M11.6 13.5 H15.4" stroke="#555" stroke-width="1.2"/></svg></div>
<div class="a" style="left:32px;top:372px;width:19px;height:19px;background:#fff;border:1px solid #b2b2b2"></div>
<div class="a" style="left:71px;top:374px;color:#4677b0">完成<span class="hy">--</span>成功</div>
<div class="a" style="left:207px;top:374px;color:#4677b0">任务<span class="l"> 2013-08-30 09:48:50</span></div>
<div class="a" style="left:382px;top:374px;color:#3a3a3a">部署设备配置</div>
<div class="a" style="left:506px;top:374px;color:#3a3a3a">一次性</div>
<div class="a" style="left:593px;top:374px;color:#3a3a3a"><span class="l">admin</span></div>
<div class="a" style="left:667px;top:374px;color:#3a3a3a"><span class="l">2013-08-30 09:49:17</span></div>
<div class="a" style="left:813px;top:374px;color:#3a3a3a"><span class="hy">--</span></div>
<div class="a" style="left:1006px;top:371px"><svg width="18" height="18" viewBox="0 0 18 18"><path d="M1.6 13.3 V1.3 H10.4 V2.8" fill="none" stroke="#555" stroke-width="1.1"/><path d="M10 15.6 H3.6 V3.4 H13.4 V9.5" fill="none" stroke="#555" stroke-width="1.1"/><path d="M5.4 6.3 H11.6 M5.4 9.4 H11.6 M5.4 12.5 H8.5" stroke="#555" stroke-width="1.1"/><circle cx="13.5" cy="13.5" r="3.2" fill="#f9f9f9" stroke="#555" stroke-width="1.2"/><path d="M13.5 11.6 V15.4 M11.6 13.5 H15.4" stroke="#555" stroke-width="1.2"/></svg></div>
<div class="a" style="left:32px;top:408px;width:19px;height:19px;background:#fff;border:1px solid #b2b2b2"></div>
<div class="a" style="left:71px;top:410px;color:#4677b0">完成<span class="hy">--</span>部分成功</div>
<div class="a" style="left:207px;top:410px;color:#4677b0">任务<span class="l"> 2013-08-30 09:32:22</span></div>
<div class="a" style="left:382px;top:410px;color:#3a3a3a">部署设备配置</div>
<div class="a" style="left:506px;top:410px;color:#3a3a3a">一次性</div>
<div class="a" style="left:593px;top:410px;color:#3a3a3a"><span class="l">admin</span></div>
<div class="a" style="left:667px;top:410px;color:#3a3a3a"><span class="l">2013-08-30 09:33:15</span></div>
<div class="a" style="left:813px;top:410px;color:#3a3a3a"><span class="hy">--</span></div>
<div class="a" style="left:958px;top:407px"><svg width="19" height="18" viewBox="0 0 19 18"><rect x="1.6" y="1.4" width="11" height="15.6" fill="none" stroke="#555" stroke-width="1.1"/><path d="M3.2 4.4 H11 M3.2 7.5 H8.8 M3.2 10.4 H6.2 M3.2 13.4 H5.8" stroke="#555" stroke-width="1.1"/><path d="M8.2 11.8 L16.4 4.2" stroke="#555" stroke-width="2.3"/><path d="M6.6 13.6 L7.3 11 L9.2 12.8 Z" fill="#555"/></svg></div>
<div class="a" style="left:1006px;top:407px"><svg width="18" height="18" viewBox="0 0 18 18"><path d="M1.6 13.3 V1.3 H10.4 V2.8" fill="none" stroke="#555" stroke-width="1.1"/><path d="M10 15.6 H3.6 V3.4 H13.4 V9.5" fill="none" stroke="#555" stroke-width="1.1"/><path d="M5.4 6.3 H11.6 M5.4 9.4 H11.6 M5.4 12.5 H8.5" stroke="#555" stroke-width="1.1"/><circle cx="13.5" cy="13.5" r="3.2" fill="#f9f9f9" stroke="#555" stroke-width="1.2"/><path d="M13.5 11.6 V15.4 M11.6 13.5 H15.4" stroke="#555" stroke-width="1.2"/></svg></div>
<div class="a" style="left:32px;top:444px;width:19px;height:19px;background:#fff;border:1px solid #b2b2b2"></div>
<div class="a" style="left:71px;top:446px;color:#4677b0">完成<span class="hy">--</span>部分成功</div>
<div class="a" style="left:207px;top:446px;color:#4677b0">任务<span class="l"> 2013-08-30 09:14:22</span></div>
<div class="a" style="left:382px;top:446px;color:#3a3a3a">部署设备配置</div>
<div class="a" style="left:506px;top:446px;color:#3a3a3a">一次性</div>
<div class="a" style="left:593px;top:446px;color:#3a3a3a"><span class="l">admin</span></div>
<div class="a" style="left:667px;top:446px;color:#3a3a3a"><span class="l">2013-08-30 09:25:55</span></div>
<div class="a" style="left:813px;top:446px;color:#3a3a3a"><span class="hy">--</span></div>
<div class="a" style="left:958px;top:443px"><svg width="19" height="18" viewBox="0 0 19 18"><rect x="1.6" y="1.4" width="11" height="15.6" fill="none" stroke="#555" stroke-width="1.1"/><path d="M3.2 4.4 H11 M3.2 7.5 H8.8 M3.2 10.4 H6.2 M3.2 13.4 H5.8" stroke="#555" stroke-width="1.1"/><path d="M8.2 11.8 L16.4 4.2" stroke="#555" stroke-width="2.3"/><path d="M6.6 13.6 L7.3 11 L9.2 12.8 Z" fill="#555"/></svg></div>
<div class="a" style="left:1006px;top:443px"><svg width="18" height="18" viewBox="0 0 18 18"><path d="M1.6 13.3 V1.3 H10.4 V2.8" fill="none" stroke="#555" stroke-width="1.1"/><path d="M10 15.6 H3.6 V3.4 H13.4 V9.5" fill="none" stroke="#555" stroke-width="1.1"/><path d="M5.4 6.3 H11.6 M5.4 9.4 H11.6 M5.4 12.5 H8.5" stroke="#555" stroke-width="1.1"/><circle cx="13.5" cy="13.5" r="3.2" fill="#f9f9f9" stroke="#555" stroke-width="1.2"/><path d="M13.5 11.6 V15.4 M11.6 13.5 H15.4" stroke="#555" stroke-width="1.2"/></svg></div>
<div class="a" style="left:39px;top:487px;color:#333">共有<span class="l">9</span>条记录，当前第<span class="l">1 - 9</span>，第<span class="l"> 1/1 </span>页。</div>
<div class="a" style="left:847px;top:480px;width:158px;height:30px;background:#f8f8f8;border:1px solid #dadada"></div>
<div class="a" style="left:878px;top:480px;width:1px;height:30px;background:#dadada"></div>
<div class="a" style="left:973px;top:480px;width:1px;height:30px;background:#dadada"></div>
<div class="a" style="left:910px;top:480px;width:32px;height:30px;background:#5fa2d9"></div>
<div class="a" style="left:923px;top:487px;color:#fff;font-size:14px">1</div>
<svg class="a" style="left:859px;top:491px" width="10" height="10" viewBox="0 0 10 10"><path d="M4.5 0.5 L1 4.75 L4.5 9 M8.5 0.5 L5 4.75 L8.5 9" fill="none" stroke="#9a9a9a" stroke-width="1.4"/></svg>
<svg class="a" style="left:892px;top:491px" width="7" height="10" viewBox="0 0 7 10"><path d="M5 0.5 L1.3 4.75 L5 9" fill="none" stroke="#9a9a9a" stroke-width="1.4"/></svg>
<svg class="a" style="left:955px;top:491px" width="7" height="10" viewBox="0 0 7 10"><path d="M1 0.5 L4.7 4.75 L1 9" fill="none" stroke="#9a9a9a" stroke-width="1.4"/></svg>
<svg class="a" style="left:984px;top:491px" width="10" height="10" viewBox="0 0 10 10"><path d="M1 0.5 L4.5 4.75 L1 9 M5 0.5 L8.5 4.75 L5 9" fill="none" stroke="#9a9a9a" stroke-width="1.4"/></svg>
<div class="a" style="left:1017px;top:480px;width:51px;height:30px;background:#fff;border:1px solid #dadada"></div>
<div class="a" style="left:1024px;top:488px;color:#333;font-size:14px">50</div>
<svg class="a" style="left:1055px;top:492px" width="7" height="6" viewBox="0 0 7 6"><path d="M0.3 0.5 H6.7 L3.5 5.5 Z" fill="#222"/></svg>
</div>
<div class="a" style="left:0;top:629px;width:1366px;height:1px;background:#959595"></div>
<div class="a" style="left:0;top:630px;width:1366px;height:2px;background:#ececec"></div>
</body></html>
